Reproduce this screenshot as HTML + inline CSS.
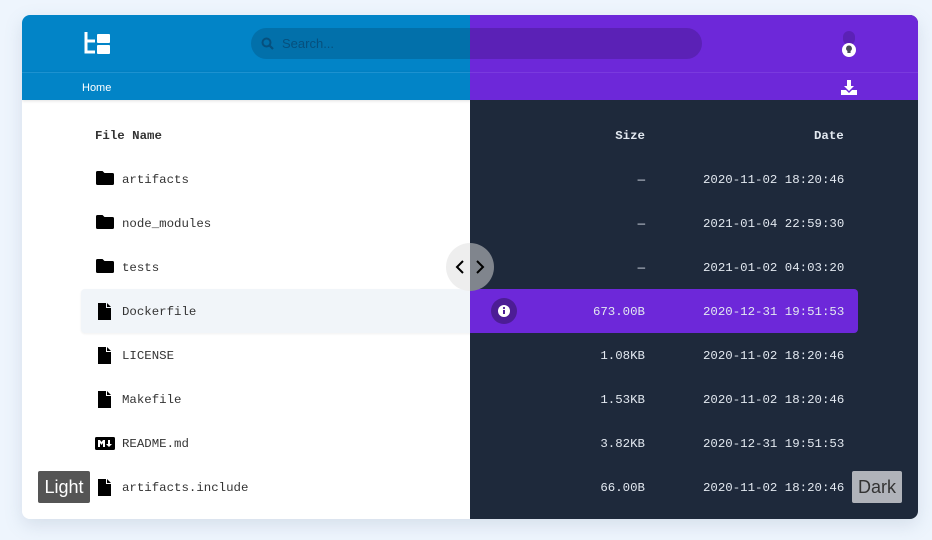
<!DOCTYPE html>
<html><head><style>
*{margin:0;padding:0;box-sizing:border-box}
body{width:932px;height:540px;background:#eef5fd;position:relative;overflow:hidden;font-family:"Liberation Mono",monospace}
.card{position:absolute;left:22px;top:15px;width:896px;height:504px;border-radius:8px;overflow:hidden;box-shadow:0 6px 18px rgba(100,120,150,.18)}
.pane{position:absolute;left:0;top:0;width:896px;height:504px}
.light{background:#fff;clip-path:inset(0 448px 0 0)}
.dark{background:#1e293b;clip-path:inset(0 0 0 448px)}
.hdr{position:absolute;left:0;top:0;width:896px;height:57px}
.bc{position:absolute;left:0;top:57px;width:896px;height:28px}
.light .hdr,.light .bc{background:#0284c7}
.light .bc{border-top:1px solid #1d92d0;box-shadow:0 1px 3px rgba(0,0,0,.12)}
.dark .hdr,.dark .bc{background:#6d28d9}
.dark .bc{border-top:1px solid #7a3ade}
.search{position:absolute;left:229px;top:13px;width:451px;height:31px;border-radius:16px}
.light .search{background:#0270aa}
.dark .search{background:#5b21b6}
.search span{position:absolute;left:31px;top:8px;font:13px "Liberation Sans",sans-serif;color:#06507e}
.home{position:absolute;left:60px;top:67px;font:11px "Liberation Sans",sans-serif;color:#fff}
.row{position:absolute;left:59px;width:777px;height:44px;font-size:12.4px}
.nm{position:absolute;left:41px;top:16px}
.ic{position:absolute;left:15px;top:13px}
.sz{position:absolute;right:213px;top:16px}
.dt{position:absolute;left:622px;top:16px}
.light .row{color:#333}
.dark .row{color:#e2e8f0}
.th{font-weight:bold}
.light .sel{background:#f1f5f9;border-radius:4px;box-shadow:0 1px 2px rgba(0,0,0,.06)}
.dark .sel{background:#6d28d9;border-radius:4px}
.lbl{position:absolute;top:471px;height:32px;font:18px "Liberation Sans",sans-serif;line-height:32px;text-align:center;border-radius:2px}
</style></head><body>
<div class="card">
<div class="pane light">
 <div class="hdr">
  <svg style="position:absolute;left:62px;top:17px" width="27" height="23" viewBox="0 0 27 23"><path d="M2 0v20h9" stroke="#fff" stroke-width="3" fill="none"/><path d="M2 9h9" stroke="#fff" stroke-width="3"/><rect x="13" y="2" width="13" height="9" rx="1" fill="#fff"/><rect x="13" y="13" width="13" height="9" rx="1" fill="#fff"/></svg>
  <div class="search"><svg style="position:absolute;left:10px;top:9px" width="13" height="13" viewBox="0 0 13 13"><circle cx="5.5" cy="5.5" r="4" stroke="#06507e" stroke-width="2" fill="none"/><path d="M8.5 8.5l3.5 3.5" stroke="#06507e" stroke-width="2.2"/></svg><span>Search...</span></div>
 </div>
 <div class="bc"></div>
 <div class="home">Home</div>
 <div class="row th" style="top:98px"><div class="nm" style="left:14px">File Name</div><div class="sz">Size</div><div class="dt" style="left:689px">Date</div></div>
</div>
<div class="pane dark">
 <div class="hdr">
  <div class="search"></div>
  <svg style="position:absolute;left:819px;top:16px" width="16" height="27" viewBox="0 0 16 27"><rect x="2" y="0" width="12" height="14" rx="6" fill="#5b21b6"/><circle cx="8" cy="19" r="7" fill="#fff"/><path d="M8 14.5a3 3 0 0 1 1.6 5.5v2h-3.2v-2A3 3 0 0 1 8 14.5z" fill="#4a4a5a"/></svg>
 </div>
 <div class="bc"></div>
 <svg style="position:absolute;left:819px;top:65px" width="16" height="15" viewBox="0 0 16 15"><path d="M6 0h4v6h3l-5 5-5-5h3z" fill="#fff"/><path d="M0 10h5l3 3 3-3h5v5H0z" fill="#fff"/></svg>
 <div class="row th" style="top:98px"><div class="sz">Size</div><div class="dt" style="left:733px">Date</div></div>
</div>
</div>
<script>
const rows=[["folder","artifacts","—","2020-11-02 18:20:46"],["folder","node_modules","—","2021-01-04 22:59:30"],["folder","tests","—","2021-01-02 04:03:20"],["file","Dockerfile","673.00B","2020-12-31 19:51:53"],["file","LICENSE","1.08KB","2020-11-02 18:20:46"],["file","Makefile","1.53KB","2020-11-02 18:20:46"],["md","README.md","3.82KB","2020-12-31 19:51:53"],["file","artifacts.include","66.00B","2020-11-02 18:20:46"]];
function icon(t,c){
 if(t=="folder")return `<svg class="ic" width="18" height="15" viewBox="0 0 18 15" style="top:14px"><path d="M0 1.5Q0 0 1.5 0h5l2 2h8Q18 2 18 3.5v9Q18 14 16.5 14h-15Q0 14 0 12.5z" fill="${c}"/></svg>`;
 if(t=="file")return `<svg class="ic" width="13" height="17" viewBox="0 0 13 17" style="left:17px;top:14px"><path d="M0 0h8v5h5v12H0z" fill="${c}"/><path d="M9 0l4 4H9z" fill="${c}"/></svg>`;
 return `<svg class="ic" width="20" height="13" viewBox="0 0 20 13" style="left:14px;top:16px"><rect width="20" height="13" rx="1.5" fill="${c}"/><path d="M3 10V3h2l1.5 2L8 3h2v7H8V6L6.5 8 5 6v4z" fill="#fff"/><path d="M13 3h2v4h2l-3 3-3-3h2z" fill="#fff"/></svg>`;
}
const L=document.querySelector('.light'),D=document.querySelector('.dark');
rows.forEach((r,i)=>{
 const top=142+i*44, sel=i==3?' sel':'';
 L.insertAdjacentHTML('beforeend',`<div class="row${sel}" style="top:${top}px">${icon(r[0],'#000')}<div class="nm">${r[1]}</div></div>`);
 D.insertAdjacentHTML('beforeend',`<div class="row${sel}" style="top:${top}px">${i==3?'<div style="position:absolute;left:410px;top:9px;width:26px;height:26px;border-radius:50%;background:#4c1d95"><svg width="26" height="26" viewBox="0 0 26 26"><circle cx="13" cy="13" r="6" fill="#fff"/><rect x="12" y="12" width="2" height="4" fill="#4c1d95"/><circle cx="13" cy="10" r="1.1" fill="#4c1d95"/></svg></div>':''}<div class="sz">${r[2]}</div><div class="dt">${r[3]}</div></div>`);
});
</script>
<div style="position:absolute;left:446px;top:243px;width:48px;height:48px;border-radius:50%;background:linear-gradient(90deg,#eeeeee 50%,#80858d 50%)"></div>
<svg style="position:absolute;left:446px;top:243px" width="48" height="48" viewBox="0 0 48 48"><path d="M17 18l-6 6 6 6M31 18l6 6-6 6" stroke="#000" stroke-width="2" fill="none"/></svg>
<div class="lbl" style="left:38px;width:52px;background:#555;color:#fff">Light</div>
<div class="lbl" style="left:852px;width:50px;background:#b0b3ba;color:#333">Dark</div>
</body></html>
